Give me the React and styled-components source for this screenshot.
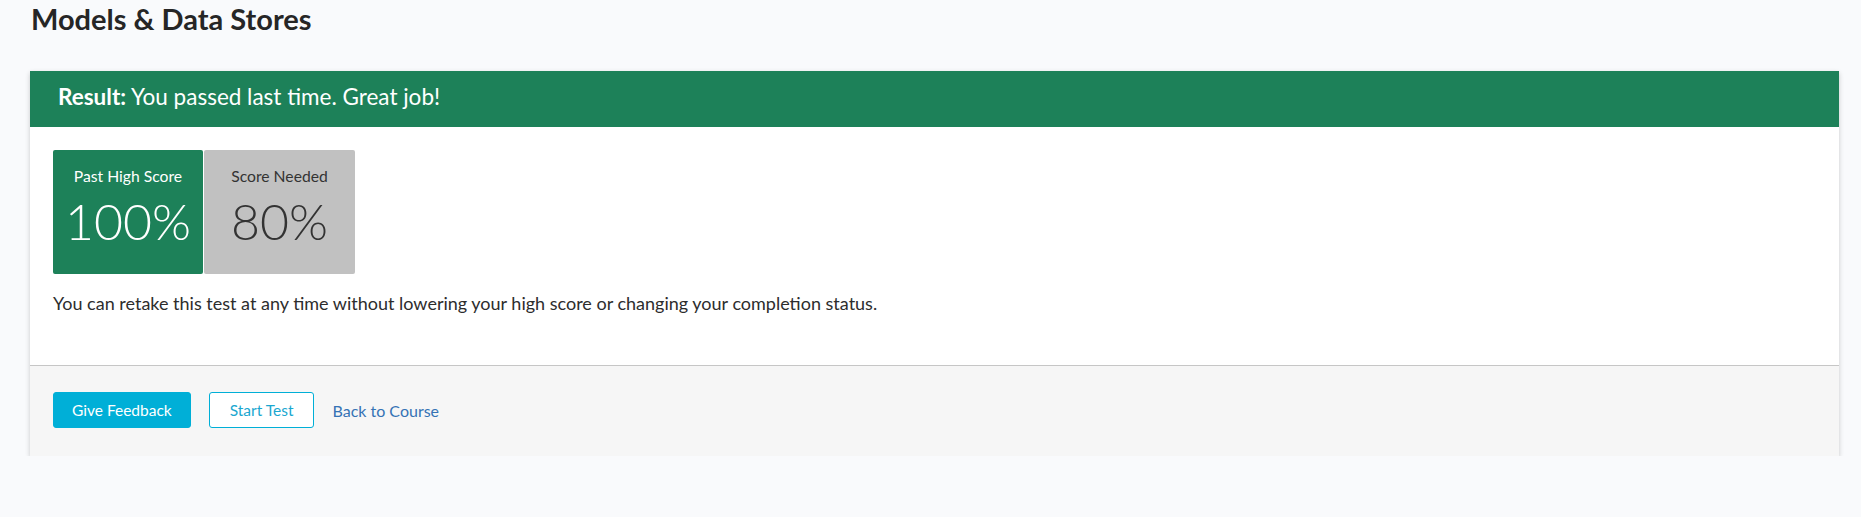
import styled, { createGlobalStyle } from "styled-components";

const GlobalStyle = createGlobalStyle`
  html, body {
    margin: 0;
    padding: 0;
    background: #f9fafc;
    font-family: Lato, "Open Sans", "Liberation Sans", sans-serif;
    color: #2d2d2d;
  }
`;

const StyledPageDiv = styled.div`
  display: flex;
  flex-direction: column;
  padding: 0 22px 0 30px;
`;

const StyledTitleH1 = styled.h1`
  margin: 0;
  padding: 0 0 0 1px;
  font-size: 29px;
  font-weight: 700;
  line-height: 38px;
  color: #262626;
`;

const StyledCardDiv = styled.div`
  margin-top: 33px;
  background: #ffffff;
  box-shadow: 0 2px 5px rgba(0, 0, 0, 0.2);
`;

const StyledResultDiv = styled.div`
  height: 56px;
  padding: 0 28px;
  background: #1d8159;
  color: #ffffff;
  font-size: 22.5px;
  line-height: 52px;
`;

const StyledBodyDiv = styled.div`
  display: flex;
  flex-direction: column;
  gap: 17px;
  padding: 23px 23px 49px;
`;

const StyledScoresDiv = styled.div`
  display: flex;
  flex-direction: row;
  gap: 1px;
`;

const StyledScoreDiv = styled.div`
  display: flex;
  flex-direction: column;
  align-items: center;
  box-sizing: border-box;
  width: ${(p) => p.$width}px;
  height: 124px;
  padding-top: 16px;
  gap: 10px;
  border-radius: 2px;
  background: ${(p) => (p.$passed ? "#1d8159" : "#c1c1c1")};
  color: ${(p) => (p.$passed ? "#ffffff" : "#333333")};
`;

const StyledScoreLabel = styled.div`
  font-size: 15.7px;
  line-height: 20px;
`;

const StyledScoreValue = styled.div`
  font-size: 50px;
  font-weight: 300;
  line-height: 50px;
`;

const StyledNoteP = styled.p`
  margin: 0;
  font-size: 18px;
  line-height: 25px;
  color: #2d2d2d;
`;

const StyledFooterDiv = styled.div`
  display: flex;
  flex-direction: row;
  align-items: center;
  gap: 18px;
  padding: 26px 23px 28px;
  background: #f6f6f6;
  border-top: 1px solid #c6c6c6;
`;

const StyledButton = styled.button`
  box-sizing: border-box;
  height: 36px;
  padding: 0 ${(p) => (p.$outline ? 20 : 18)}px;
  border: 1px solid #00afd7;
  border-radius: 3px;
  background: ${(p) => (p.$outline ? "#ffffff" : "#00afd7")};
  color: ${(p) => (p.$outline ? "#1aa7d0" : "#ffffff")};
  font-family: inherit;
  font-size: 15.5px;
  cursor: pointer;
`;

const StyledLinkA = styled.a`
  color: #3573b5;
  font-size: 16px;
  text-decoration: none;
`;

function App() {
  return (
    <>
      <GlobalStyle />
      <StyledPageDiv>
        <StyledTitleH1>Models &amp; Data Stores</StyledTitleH1>
        <StyledCardDiv>
          <StyledResultDiv>
            <b>Result:</b> You passed last time. Great job!
          </StyledResultDiv>
          <StyledBodyDiv>
            <StyledScoresDiv>
              <StyledScoreDiv $passed $width={150}>
                <StyledScoreLabel>Past High Score</StyledScoreLabel>
                <StyledScoreValue>100%</StyledScoreValue>
              </StyledScoreDiv>
              <StyledScoreDiv $width={151}>
                <StyledScoreLabel>Score Needed</StyledScoreLabel>
                <StyledScoreValue>80%</StyledScoreValue>
              </StyledScoreDiv>
            </StyledScoresDiv>
            <StyledNoteP>
              You can retake this test at any time without lowering your high
              score or changing your completion status.
            </StyledNoteP>
          </StyledBodyDiv>
          <StyledFooterDiv>
            <StyledButton>Give Feedback</StyledButton>
            <StyledButton $outline>Start Test</StyledButton>
            <StyledLinkA href="#">Back to Course</StyledLinkA>
          </StyledFooterDiv>
        </StyledCardDiv>
      </StyledPageDiv>
    </>
  );
}

export default App;
